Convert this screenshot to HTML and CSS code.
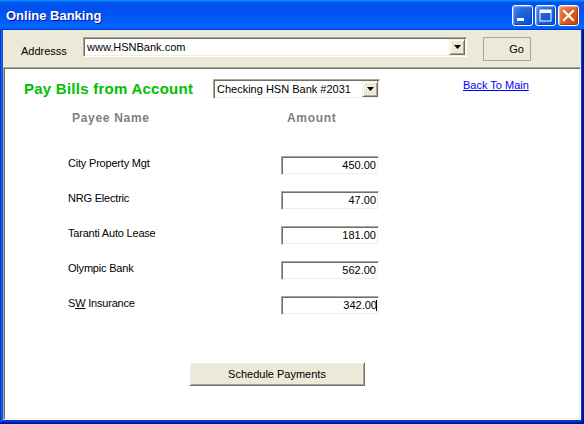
FILE: index.html
```html
<!DOCTYPE html>
<html>
<head>
<meta charset="utf-8">
<title>Online Banking</title>
<link rel="stylesheet" href="styles.css">
</head>
<body>
<div class="window">
  <div class="titlebar">
    <span class="title">Online Banking</span>
    <div class="tb-buttons">
      <span class="tb-btn">
        <svg width="19" height="19" viewBox="0 0 19 19"><rect x="4" y="12" width="7" height="3" fill="#fff"/></svg>
      </span>
      <span class="tb-btn">
        <svg width="19" height="19" viewBox="0 0 19 19"><rect x="4" y="4" width="11" height="11" fill="none" stroke="#fff" stroke-width="1"/><rect x="4" y="4" width="11" height="3" fill="#fff"/></svg>
      </span>
      <span class="tb-btn close">
        <svg width="19" height="19" viewBox="0 0 19 19"><path d="M5 5 L14 14 M14 5 L5 14" stroke="#fff" stroke-width="2.2" stroke-linecap="square"/></svg>
      </span>
    </div>
  </div>
  <div class="client">
    <div class="toolbar">
      <span class="addr-label">Addresss</span>
      <div class="combo addr">
        <span class="combo-text">www.HSNBank.com</span>
        <span class="combo-arrow"><svg width="7" height="4" viewBox="0 0 7 4"><path d="M0 0 H7 L3.5 4 Z" fill="#000"/></svg></span>
      </div>
      <div class="go">Go</div>
    </div>
    <div class="panel">
      <div class="head">
        <h1 class="heading">Pay Bills from Account</h1>
        <div class="combo account">
          <span class="combo-text">Checking HSN Bank #2031</span>
          <span class="combo-arrow"><svg width="7" height="4" viewBox="0 0 7 4"><path d="M0 0 H7 L3.5 4 Z" fill="#000"/></svg></span>
        </div>
        <a class="back" href="#">Back To Main</a>
      </div>
      <div class="cols">
        <span class="col-payee">Payee Name</span>
        <span class="col-amount">Amount</span>
      </div>
      <div class="rows">
        <div class="row"><span class="payee">City Property Mgt</span><div class="amount">450.00</div></div>
        <div class="row"><span class="payee">NRG Electric</span><div class="amount">47.00</div></div>
        <div class="row"><span class="payee">Taranti Auto Lease</span><div class="amount">181.00</div></div>
        <div class="row"><span class="payee">Olympic Bank</span><div class="amount">562.00</div></div>
        <div class="row"><span class="payee">S<u>W</u> Insurance</span><div class="amount">342.00<span class="caret"></span></div></div>
      </div>
      <div class="actions">
        <button class="schedule" type="button">Schedule Payments</button>
      </div>
    </div>
  </div>
</div>
</body>
</html>
```

FILE: styles.css
```css
html, body {
  margin: 0;
  padding: 0;
}
body {
  width: 584px;
  height: 424px;
  overflow: hidden;
  font-family: "Liberation Sans", Arial, sans-serif;
  font-size: 11px;
  line-height: 13px;
  color: #000;
  background: #fff;
}
.window {
  width: 584px;
  height: 424px;
  display: flex;
  flex-direction: column;
  background: #0831d9;
  box-shadow: inset -1px -1px #00138c, inset 1px 1px #0831d9, inset -2px -2px #001ea0, inset 2px 2px #166aee, inset -3px -3px #003bda, inset 3px 3px #0855dd;
}
.titlebar {
  flex: none;
  height: 30px;
  box-sizing: border-box;
  display: flex;
  align-items: center;
  justify-content: space-between;
  padding: 0 5px 0 6px;
  background: linear-gradient(180deg, #0997ff, #0053ee 8%, #0050ee 40%, #0066ff 88%, #0066ff 93%, #005bff 95%, #003dd7 96%, #003dd7);
}
.title {
  color: #fff;
  font-weight: bold;
  font-size: 13px;
  line-height: 16px;
  margin-top: 2px;
  text-shadow: 1px 1px #0f1089;
}
.tb-buttons {
  display: flex;
  gap: 2px;
  margin-top: 1px;
}
.tb-btn {
  width: 21px;
  height: 21px;
  box-sizing: border-box;
  border: 1px solid #fff;
  border-radius: 3px;
  display: flex;
  align-items: center;
  justify-content: center;
  background: radial-gradient(circle at 90% 90%, #0054e9 0%, #2263d5 55%, #4482f0 90%, #5a94ff 100%);
  box-shadow: inset -1px -1px 1px #1c3bb7, inset 1px 1px 1px #7ba6ff;
}
.tb-btn.close {
  background: radial-gradient(circle at 90% 90%, #cc4600 0%, #dc6527 55%, #e3865f 90%, #e8a58a 100%);
  box-shadow: inset -1px -1px 1px #a8300f, inset 1px 1px 1px #f2b79c;
}
.client {
  flex: 1;
  display: flex;
  flex-direction: column;
  margin: 0 3px 4px;
  background: #ece9d8;
}
.toolbar {
  flex: none;
  height: 37px;
  box-sizing: border-box;
  display: flex;
  align-items: flex-start;
  padding: 7px 0 0 18px;
}
.addr-label {
  width: 62px;
  margin-top: 8px;
}
.combo {
  box-sizing: border-box;
  height: 20px;
  display: flex;
  align-items: center;
  background: #fff;
  border: 1px solid;
  border-color: #aca899 #fff #fff #aca899;
  box-shadow: inset 1px 1px #716f64, inset -1px -1px #f1efe2;
  padding: 1px;
}
.combo-text {
  flex: 1;
  padding-left: 2px;
  white-space: nowrap;
}
.combo-arrow {
  width: 16px;
  height: 16px;
  box-sizing: border-box;
  background: #ece9d8;
  border: 1px solid;
  border-color: #f1efe2 #716f64 #716f64 #f1efe2;
  box-shadow: inset 1px 1px #fff, inset -1px -1px #aca899;
  display: flex;
  align-items: center;
  justify-content: center;
}
.addr {
  width: 384px;
}
.go {
  margin-left: 16px;
  width: 48px;
  height: 24px;
  box-sizing: border-box;
  border: 1px solid #aca899;
  text-align: right;
  padding: 5px 6px 0 0;
}
.panel {
  flex: 1;
  background: #fff;
  border: 1px solid;
  border-color: #aca899 #fff #fff #aca899;
  box-shadow: inset 1px 1px #716f64, inset -1px -1px #f1efe2;
  padding: 11px 1px 1px 1px;
  display: flex;
  flex-direction: column;
}
.head {
  display: flex;
  align-items: flex-start;
  padding-left: 19px;
  height: 20px;
}
.heading {
  margin: 0;
  width: 189px;
  font-size: 15px;
  line-height: 20px;
  font-weight: bold;
  letter-spacing: 0.25px;
  color: #00c000;
}
.account {
  width: 167px;
}
.back {
  margin-left: 83px;
  color: #0000ff;
  text-decoration: underline;
}
.cols {
  display: grid;
  grid-template-columns: 214px 98px;
  margin: 12px 0 0 63px;
  font-weight: bold;
  font-size: 12px;
  line-height: 14px;
  letter-spacing: 0.7px;
  color: #808080;
}
.col-payee {
  padding-left: 4px;
}
.col-amount {
  padding-left: 5px;
}
.rows {
  margin: 31px 0 0 62px;
  display: flex;
  flex-direction: column;
  gap: 16px;
}
.row {
  display: grid;
  grid-template-columns: 214px 98px;
  height: 19px;
}
.payee {
  padding: 1px 0 0 1px;
  letter-spacing: -0.2px;
}
.payee u {
  text-decoration: underline;
}
.amount {
  box-sizing: border-box;
  height: 19px;
  border: 1px solid;
  border-color: #aca899 #fff #fff #aca899;
  box-shadow: inset 1px 1px #716f64, inset -1px -1px #f1efe2;
  text-align: right;
  padding: 2px 2px 0 0;
}
.caret {
  display: inline-block;
  width: 1px;
  height: 11px;
  background: #000;
  vertical-align: -2px;
  margin-left: -1px;
  margin-right: -1px;
}
.actions {
  margin: 47px 0 0 184px;
}
.schedule {
  width: 176px;
  height: 24px;
  box-sizing: border-box;
  margin: 0;
  padding: 0;
  font-family: "Liberation Sans", Arial, sans-serif;
  font-size: 11px;
  color: #000;
  background: #ece9d8;
  border: 1px solid;
  border-color: #fff #716f64 #716f64 #fff;
  box-shadow: inset 1px 1px #f1efe2, inset -1px -1px #aca899;
}
```
